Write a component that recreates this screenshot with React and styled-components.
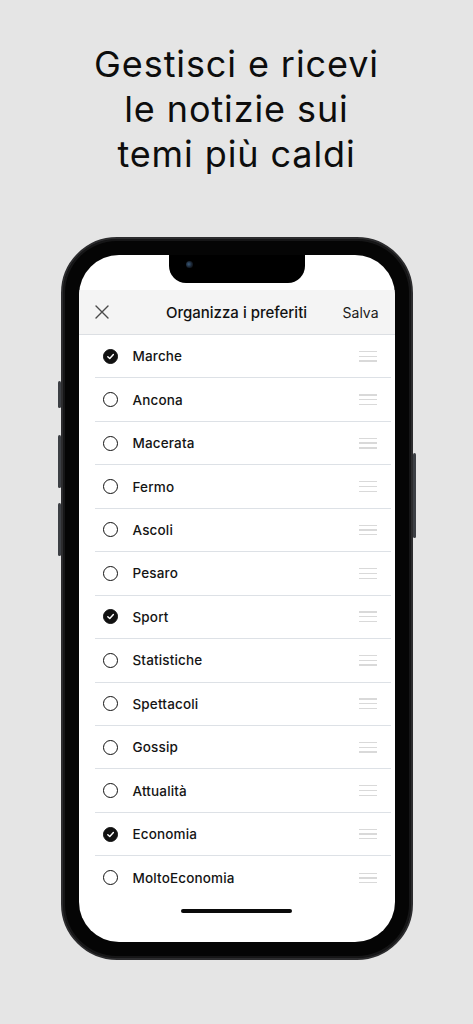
import React from 'react';
import styled, { createGlobalStyle } from 'styled-components';

const GlobalStyle = createGlobalStyle`
  html, body {
    margin: 0;
    padding: 0;
    background: #e5e5e5;
  }
  body {
    font-family: Inter, "Noto Sans", sans-serif;
    color: #111;
  }
`;

const Page = styled.div`
  width: 473px;
  height: 1024px;
  background: #e5e5e5;
  display: flex;
  flex-direction: column;
  align-items: center;
  overflow: hidden;
`;

const Headline = styled.h1`
  margin: 42px 0 0;
  font-family: Inter, "Noto Sans", sans-serif;
  font-weight: 400;
  font-size: 36px;
  line-height: 45px;
  text-align: center;
  color: #0d0d0d;
  letter-spacing: 0.9px;
`;

const Phone = styled.div`
  position: relative;
  margin-top: 60px;
  width: 352px;
  height: 723px;
  box-sizing: border-box;
  padding: 16px;
  border-radius: 56px;
  background: #050505;
  border: 2px solid #2c2c2e;
  box-shadow: inset 0 0 0 2px #161617;
`;

const SideButton = styled.span`
  position: absolute;
  width: 3px;
  border-radius: 2px;
  background: #3c3f44;
  top: ${(p) => p.$top}px;
  height: ${(p) => p.$height}px;
  ${(p) => (p.$right ? 'right: -5px;' : 'left: -5px;')}
`;

const Screen = styled.div`
  position: relative;
  width: 100%;
  height: 100%;
  background: #fff;
  border-radius: 40px;
  overflow: hidden;
  display: flex;
  flex-direction: column;
`;

const Notch = styled.div`
  position: absolute;
  top: 0;
  left: 50%;
  transform: translateX(-50%);
  width: 136px;
  height: 28px;
  background: #000;
  border-radius: 0 0 17px 17px;
`;

const Speaker = styled.div`
  position: absolute;
  top: -14px;
  left: 50%;
  transform: translateX(-50%);
  width: 58px;
  height: 5px;
  border-radius: 3px;
  background: #1b1b1d;
  border: 1px solid #2a2a2c;
`;

const Camera = styled.div`
  position: absolute;
  left: 17px;
  top: 6px;
  width: 7px;
  height: 7px;
  border-radius: 50%;
  background: radial-gradient(circle at 40% 45%, #3a5a7a 0%, #17202c 55%, #0a0a0a 100%);
`;

const StatusArea = styled.div`
  height: 35px;
  flex-shrink: 0;
`;

const NavBar = styled.div`
  height: 45px;
  flex-shrink: 0;
  display: grid;
  grid-template-columns: 1fr auto 1fr;
  align-items: center;
  padding: 0 16px 0 16px;
  background: #f4f4f4;
  border-bottom: 1px solid #dcdfe3;
  box-sizing: border-box;
`;

const CloseButton = styled.button`
  width: 14px;
  height: 14px;
  padding: 0;
  border: 0;
  background: none;
  display: flex;
  justify-self: start;
`;

const NavTitle = styled.div`
  font-size: 15px;
  font-weight: 500;
  color: #111;
  letter-spacing: 0;
`;

const SaveButton = styled.button`
  justify-self: end;
  border: 0;
  background: none;
  padding: 0;
  font-family: Inter, "Noto Sans", sans-serif;
  font-size: 14px;
  color: #1a1a1a;
`;

const List = styled.ul`
  list-style: none;
  margin: 0 4px 0 16px;
  padding: 0;
`;

const Row = styled.li`
  height: 43.45px;
  box-sizing: border-box;
  display: flex;
  align-items: center;
  border-bottom: ${(p) => (p.$last ? 'none' : '1px solid #dde1e6')};
  padding: 0 14px 0 8px;
`;

const Check = styled.span`
  width: 15px;
  height: 15px;
  box-sizing: border-box;
  border-radius: 50%;
  border: 1.6px solid #111;
  background: ${(p) => (p.$on ? '#111' : 'transparent')};
  display: flex;
  align-items: center;
  justify-content: center;
  flex-shrink: 0;
`;

const Label = styled.span`
  margin-left: 15px;
  flex: 1;
  font-size: 13.5px;
  font-weight: 500;
  color: #141414;
  letter-spacing: 0.15px;
`;

const Handle = styled.span`
  width: 18px;
  display: flex;
  flex-direction: column;
  gap: 3.5px;

  i {
    display: block;
    height: 1.3px;
    background: #d9d9d9;
  }
`;

const HomeBar = styled.div`
  margin: auto auto 29px;
  width: 111px;
  height: 4px;
  border-radius: 3px;
  background: #0a0a0a;
`;

const items = [
  ['Marche', true],
  ['Ancona', false],
  ['Macerata', false],
  ['Fermo', false],
  ['Ascoli', false],
  ['Pesaro', false],
  ['Sport', true],
  ['Statistiche', false],
  ['Spettacoli', false],
  ['Gossip', false],
  ['Attualità', false],
  ['Economia', true],
  ['MoltoEconomia', false],
];

const App = () => {
  return (
    <Page>
      <GlobalStyle />
      <Headline>
        Gestisci e ricevi
        <br />
        le notizie sui
        <br />
        temi più caldi
      </Headline>
      <Phone>
        <SideButton $top={142} $height={27} />
        <SideButton $top={196} $height={53} />
        <SideButton $top={264} $height={53} />
        <SideButton $right $top={214} $height={85} />
        <Screen>
          <StatusArea />
          <NavBar>
            <CloseButton aria-label="Chiudi">
              <svg width="14" height="14" viewBox="0 0 14 14">
                <path d="M1 1L13 13M13 1L1 13" stroke="#4a4a4a" strokeWidth="1.4" strokeLinecap="round" />
              </svg>
            </CloseButton>
            <NavTitle>Organizza i preferiti</NavTitle>
            <SaveButton>Salva</SaveButton>
          </NavBar>
          <List>
            {items.map(([name, on], i) => (
              <Row key={name} $last={i === items.length - 1}>
                <Check $on={on}>
                  {on && (
                    <svg width="9" height="9" viewBox="0 0 10 10">
                      <path d="M2 5.2L4.2 7.3L8.2 2.8" stroke="#fff" strokeWidth="1.6" fill="none" strokeLinecap="round" strokeLinejoin="round" />
                    </svg>
                  )}
                </Check>
                <Label>{name}</Label>
                <Handle>
                  <i />
                  <i />
                  <i />
                </Handle>
              </Row>
            ))}
          </List>
          <HomeBar />
          <Notch>
            <Speaker />
            <Camera />
          </Notch>
        </Screen>
      </Phone>
    </Page>
  );
};

export default App;
